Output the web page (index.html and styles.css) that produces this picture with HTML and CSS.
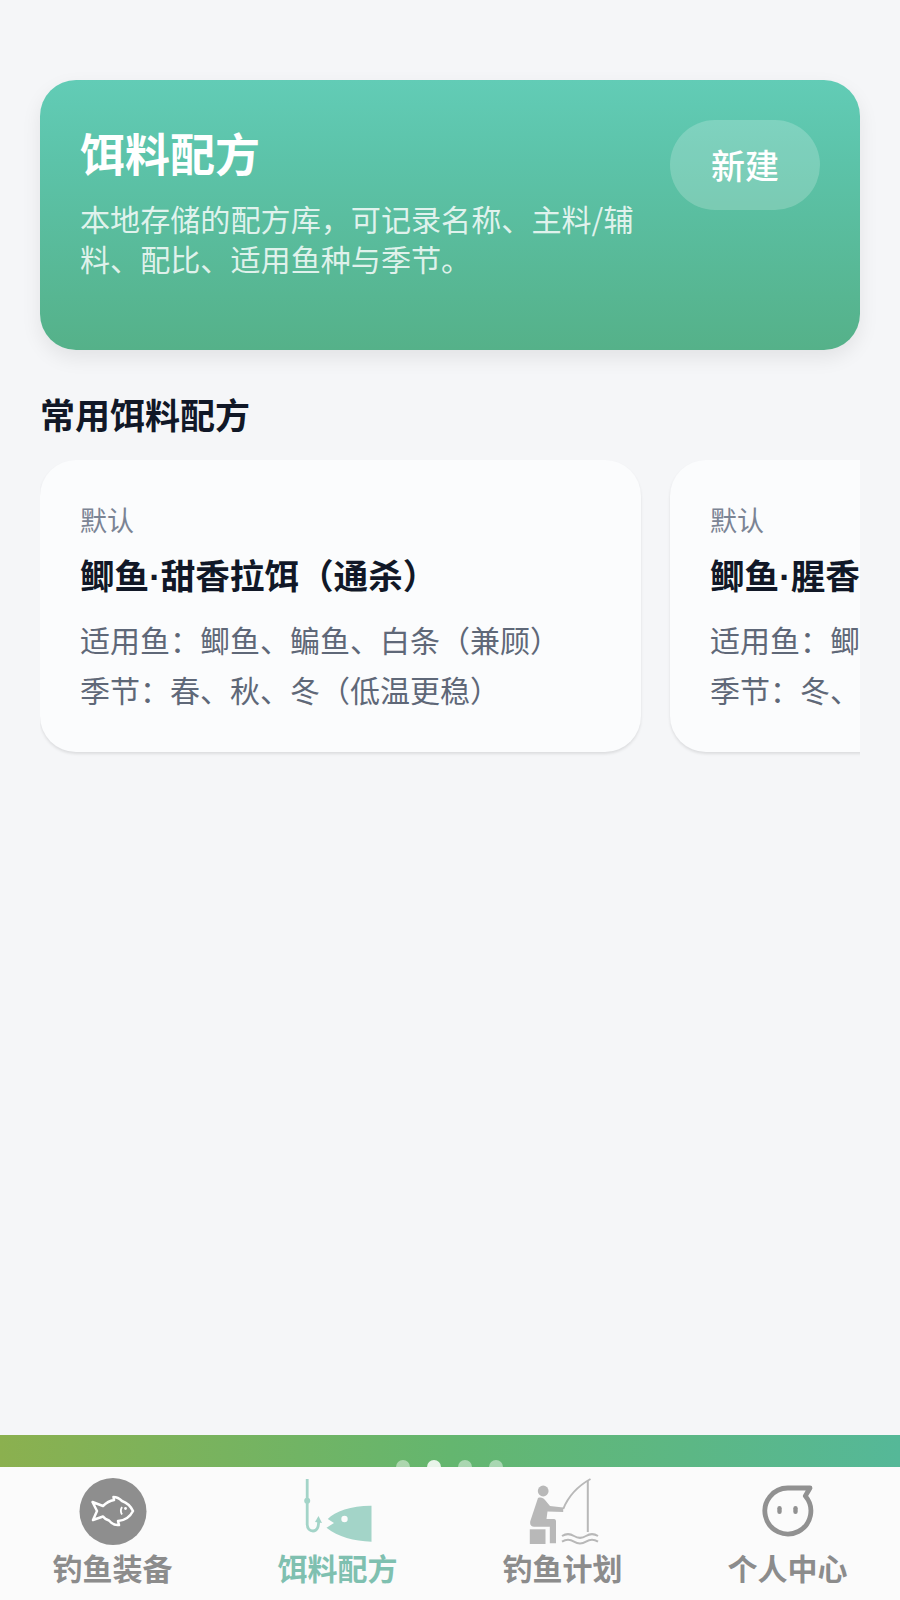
FILE: index.html
```html
<!DOCTYPE html>
<html lang="zh-CN">
<head>
    <meta charset="UTF-8">
    <meta name="viewport" content="width=device-width, initial-scale=1.0">
    <title>饵料配方</title>
    <link rel="stylesheet" href="styles.css">
</head>
<body>
    <div class="app">
        <main class="content">
            <section class="hero">
                <div class="hero-text">
                    <h1>饵料配方</h1>
                    <p>本地存储的配方库，可记录名称、主料/辅料、配比、适用鱼种与季节。</p>
                </div>
                <button class="new-btn">新建</button>
            </section>

            <h2 class="section-title">常用饵料配方</h2>
            <div class="card-row">
                <div class="recipe-card">
                    <div class="recipe-tag">默认</div>
                    <div class="recipe-name">鲫鱼<span class="name-sep">·</span>甜香拉饵（通杀）</div>
                    <div class="recipe-line">适用鱼：鲫鱼、鳊鱼、白条（兼顾）</div>
                    <div class="recipe-line">季节：春、秋、冬（低温更稳）</div>
                </div>
                <div class="recipe-card">
                    <div class="recipe-tag">默认</div>
                    <div class="recipe-name">鲫鱼<span class="name-sep">·</span>腥香拉饵（野钓）</div>
                    <div class="recipe-line">适用鱼：鲫鱼、鲤鱼、草鱼</div>
                    <div class="recipe-line">季节：冬、春（低温更稳）</div>
                </div>
            </div>
        </main>

        <div class="banner-strip">
            <div class="dots">
                <span class="dot"></span>
                <span class="dot active"></span>
                <span class="dot"></span>
                <span class="dot"></span>
            </div>
        </div>

        <nav class="tabbar">
            <div class="tab">
                <svg class="tab-icon" viewBox="0 0 100 72">
                    <circle cx="50" cy="35.5" r="33.5" fill="#8e8e8e"/>
                    <path d="M29.5 26 L40 30 C44 26 48 24.5 51 24 L50.5 21 C54 21 57 23 59 25 C65 27 68 31 70 35 C67 41 61 44.5 55 45 L56 49 C52 49.5 48 47 46 44.5 C43 43.5 41 42 40 40.5 L30 44 L34 35 Z" fill="none" stroke="#fff" stroke-width="2.5" stroke-linejoin="round"/>
                    <path d="M59 31 C57.5 33.5 57.5 36 59 38.5" fill="none" stroke="#fff" stroke-width="1.8"/>
                    <circle cx="62.5" cy="32.5" r="1.4" fill="#fff"/>
                </svg>
                <span>钓鱼装备</span>
            </div>
            <div class="tab active">
                <svg class="tab-icon" viewBox="0 0 100 72">
                    <path d="M19.2 3 V48 C19.2 53 22 55 25 55 C29 55 31 51 30.5 44" fill="none" stroke="#a3d4c8" stroke-width="2.8"/>
                    <path d="M30.5 40 L34 47 L27 46 Z" fill="#a3d4c8"/>
                    <circle cx="19.2" cy="24.7" r="3" fill="#a3d4c8"/>
                    <path d="M83.5 29.7 V65.7 C66 65 50 61 38.5 51.7 L46 47 L39.8 43 C47 35 64 29.5 83.5 29.7 Z" fill="#a3d4c8"/>
                    <circle cx="56.5" cy="43" r="3.2" fill="#fbfbfb"/>
                </svg>
                <span>饵料配方</span>
            </div>
            <div class="tab">
                <svg class="tab-icon" viewBox="0 0 100 72">
                    <circle cx="30.2" cy="15" r="5.4" fill="#b8b8b8"/>
                    <path d="M25 22 C28 21 30.5 22 32 24 L37 30 L50.2 31.5 V36 L34.5 35.5 L33.5 43 H41 C42.5 43 43 44 43 45.5 V67.3 H36.8 V50.7 H21 C17.5 50.7 16.5 47.5 17.5 44.5 Z" fill="#b8b8b8"/>
                    <rect x="16.8" y="53.3" width="15.7" height="14.7" fill="#b8b8b8"/>
                    <path d="M50.2 33 C55 21 65 10 77.5 3" fill="none" stroke="#b8b8b8" stroke-width="2"/>
                    <path d="M74.8 5 V56" fill="none" stroke="#b8b8b8" stroke-width="2"/>
                    <path d="M49 60 C53 57.5 57 57.5 61 60 S69 62.5 73 60 S81 57.5 85 60 M49 65.7 C53 63.2 57 63.2 61 65.7 S69 68.2 73 65.7 S81 63.2 85 65.7" fill="none" stroke="#b8b8b8" stroke-width="2"/>
                </svg>
                <span>钓鱼计划</span>
            </div>
            <div class="tab">
                <svg class="tab-icon" viewBox="0 0 100 72">
                    <path d="M67.3 20 A23 23 0 1 1 50 12 H72 Z" fill="none" stroke="#919191" stroke-width="4.8" stroke-linejoin="round"/>
                    <rect x="39.3" y="30" width="4.4" height="8" rx="2.2" fill="#919191"/>
                    <rect x="55.3" y="30" width="4.4" height="8" rx="2.2" fill="#919191"/>
                </svg>
                <span>个人中心</span>
            </div>
        </nav>
    </div>
</body>
</html>
```

FILE: styles.css
```css
body {
    font-family: "Noto Sans CJK SC", "Noto Sans", sans-serif;
    margin: 0;
    padding: 0;
    background-color: #f5f6f8;
}
.app {
    display: flex;
    flex-direction: column;
    height: 1600px;
    overflow: hidden;
}
.content {
    flex: 1;
    padding: 80px 40px 0;
    min-height: 0;
}
.hero {
    display: flex;
    justify-content: space-between;
    align-items: flex-start;
    gap: 30px;
    height: 270px;
    box-sizing: border-box;
    padding: 40px;
    border-radius: 36px;
    background: linear-gradient(180deg, #62ccb6 0%, #5cc3a9 30%, #55b189 100%);
    box-shadow: 0px 8px 20px rgba(0, 0, 0, 0.08);
}
.hero-text {
    flex: 1;
}
.hero h1 {
    margin: 1px 0 13px;
    font-size: 45px;
    line-height: 64px;
    font-weight: 700;
    color: #fff;
}
.hero p {
    margin: 0;
    font-size: 30.1px;
    line-height: 40px;
    color: rgba(255, 255, 255, 0.82);
}
.new-btn {
    flex: none;
    width: 150px;
    height: 90px;
    padding: 0 0 2px;
    border: none;
    border-radius: 45px;
    background-color: rgba(255, 255, 255, 0.2);
    color: #fff;
    font-family: inherit;
    font-size: 34px;
    font-weight: 500;
}
.section-title {
    margin: 39px 0 21px;
    font-size: 35px;
    line-height: 50px;
    font-weight: 700;
    color: #111827;
}
.card-row {
    display: flex;
    gap: 29px;
    overflow: hidden;
    padding-bottom: 6px;
}
.recipe-card {
    flex: none;
    width: 601px;
    height: 292px;
    box-sizing: border-box;
    padding: 42px 40px 36px;
    border-radius: 36px;
    background: #fbfcfd;
    box-shadow: 0px 2px 3px rgba(0, 0, 0, 0.1);
    white-space: nowrap;
}
.recipe-tag {
    font-size: 27px;
    line-height: 36px;
    color: #7b8494;
}
.recipe-name {
    margin: 11px 0 12px;
    font-size: 34.6px;
    line-height: 50px;
    font-weight: 700;
    color: #111827;
}
.name-sep {
    font-family: "Liberation Sans", sans-serif;
}
.recipe-line {
    font-size: 30px;
    line-height: 50px;
    color: #5f6878;
}
.banner-strip {
    position: relative;
    flex: none;
    height: 32px;
    overflow: hidden;
    background: linear-gradient(90deg, #8bb04f 0%, #64b66f 50%, #55b898 100%);
}
.dots {
    position: absolute;
    left: 396px;
    bottom: -7px;
    display: flex;
    gap: 17px;
}
.dot {
    width: 14px;
    height: 14px;
    border-radius: 50%;
    background: rgba(255, 255, 255, 0.45);
}
.dot.active {
    background: rgba(255, 255, 255, 0.85);
}
.tabbar {
    flex: none;
    display: flex;
    height: 133px;
    box-sizing: border-box;
    padding-top: 9px;
    background: #fbfbfb;
}
.tab {
    flex: 1;
    display: flex;
    flex-direction: column;
    align-items: center;
    font-size: 30px;
    line-height: 38px;
    font-weight: 700;
    color: #8c8c8c;
}
.tab.active {
    color: #7fc0b0;
}
.tab-icon {
    width: 100px;
    height: 72px;
}
```
